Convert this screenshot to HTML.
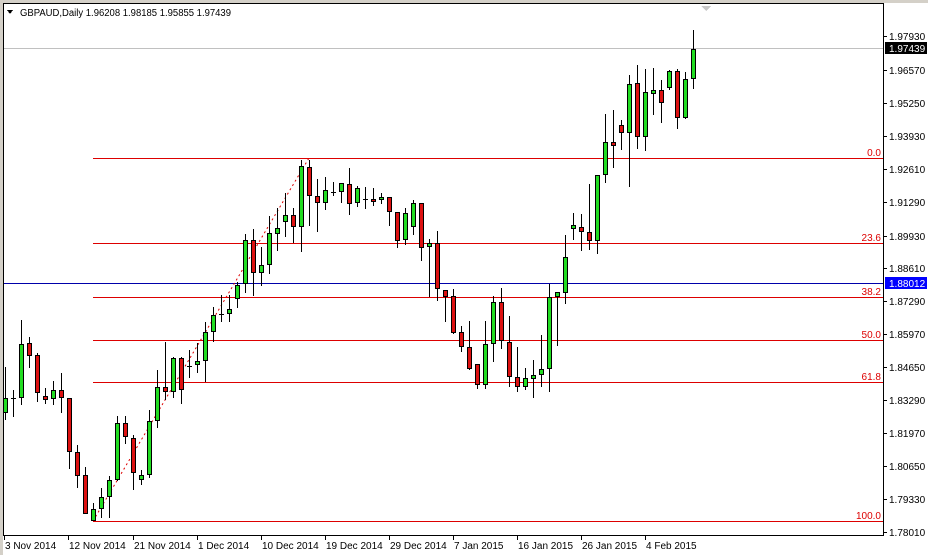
<!DOCTYPE html>
<html><head><meta charset="utf-8"><style>
html,body{margin:0;padding:0;background:#fff;width:928px;height:555px;overflow:hidden}
svg{display:block;font-family:"Liberation Sans",sans-serif;font-size:10px}
.g rect{fill:#22dd22;stroke:#000}
.r rect{fill:#dd1111;stroke:#000}
</style></head><body>
<svg width="928" height="555" viewBox="0 0 928 555" shape-rendering="crispEdges">
<rect x="0" y="0" width="928" height="555" fill="#fff"/>
<rect x="0" y="0" width="928" height="3" fill="#d4d0c8"/>
<rect x="0" y="0" width="3" height="555" fill="#d4d0c8"/>
<rect x="3.5" y="3.5" width="880" height="532" fill="#fff" stroke="#000"/>
<line x1="4" y1="48.5" x2="883" y2="48.5" stroke="#c0c0c0"/>
<line x1="4" y1="283.5" x2="883" y2="283.5" stroke="#0000aa"/>
<g stroke="#dd0000">
<line x1="93" y1="158.5" x2="883" y2="158.5"/>
<line x1="93" y1="243.5" x2="883" y2="243.5"/>
<line x1="93" y1="297.5" x2="883" y2="297.5"/>
<line x1="93" y1="340.5" x2="883" y2="340.5"/>
<line x1="93" y1="382.5" x2="883" y2="382.5"/>
<line x1="93" y1="521.5" x2="883" y2="521.5"/>
</g>
<line x1="93" y1="521" x2="309" y2="158" stroke="#dd0000" stroke-dasharray="2 3" shape-rendering="auto"/>
<g fill="#dd0000" text-anchor="end">
<text x="881" y="156">0.0</text><text x="881" y="241">23.6</text><text x="881" y="295">38.2</text>
<text x="881" y="338">50.0</text><text x="881" y="380">61.8</text><text x="881" y="519">100.0</text>
</g>
<g stroke="#000">
<line x1="5.5" y1="367" x2="5.5" y2="420"/><line x1="13.5" y1="390" x2="13.5" y2="417"/><line x1="21.5" y1="320" x2="21.5" y2="405"/><line x1="29.5" y1="337" x2="29.5" y2="368"/><line x1="37.5" y1="353" x2="37.5" y2="402"/><line x1="45.5" y1="388" x2="45.5" y2="404"/><line x1="53.5" y1="381" x2="53.5" y2="405"/><line x1="61.5" y1="373" x2="61.5" y2="413"/><line x1="69.5" y1="398" x2="69.5" y2="469"/><line x1="77.5" y1="445" x2="77.5" y2="488"/><line x1="85.5" y1="467" x2="85.5" y2="514"/><line x1="93.5" y1="503" x2="93.5" y2="521"/><line x1="101.5" y1="488" x2="101.5" y2="518"/><line x1="109.5" y1="476" x2="109.5" y2="518"/><line x1="117.5" y1="416" x2="117.5" y2="481"/><line x1="125.5" y1="416" x2="125.5" y2="444"/><line x1="133.5" y1="435" x2="133.5" y2="490"/><line x1="141.5" y1="470" x2="141.5" y2="485"/><line x1="149.5" y1="410" x2="149.5" y2="478"/><line x1="157.5" y1="370" x2="157.5" y2="428"/><line x1="165.5" y1="342" x2="165.5" y2="400"/><line x1="173.5" y1="357" x2="173.5" y2="398"/><line x1="181.5" y1="357" x2="181.5" y2="404"/><line x1="189.5" y1="350" x2="189.5" y2="378"/><line x1="197.5" y1="343" x2="197.5" y2="373"/><line x1="205.5" y1="322" x2="205.5" y2="382"/><line x1="213.5" y1="307" x2="213.5" y2="342"/><line x1="221.5" y1="295" x2="221.5" y2="322"/><line x1="229.5" y1="295" x2="229.5" y2="322"/><line x1="237.5" y1="282" x2="237.5" y2="308"/><line x1="245.5" y1="234" x2="245.5" y2="293"/><line x1="253.5" y1="229" x2="253.5" y2="296"/><line x1="261.5" y1="247" x2="261.5" y2="286"/><line x1="269.5" y1="216" x2="269.5" y2="274"/><line x1="277.5" y1="208" x2="277.5" y2="251"/><line x1="285.5" y1="193" x2="285.5" y2="237"/><line x1="293.5" y1="208" x2="293.5" y2="243"/><line x1="301.5" y1="160" x2="301.5" y2="252"/><line x1="309.5" y1="160" x2="309.5" y2="226"/><line x1="317.5" y1="179" x2="317.5" y2="232"/><line x1="325.5" y1="177" x2="325.5" y2="210"/><line x1="333.5" y1="182" x2="333.5" y2="196"/><line x1="341.5" y1="183" x2="341.5" y2="203"/><line x1="349.5" y1="168" x2="349.5" y2="215"/><line x1="357.5" y1="186" x2="357.5" y2="207"/><line x1="365.5" y1="187" x2="365.5" y2="209"/><line x1="373.5" y1="188" x2="373.5" y2="206"/><line x1="381.5" y1="193" x2="381.5" y2="204"/><line x1="389.5" y1="197" x2="389.5" y2="226"/><line x1="397.5" y1="212" x2="397.5" y2="248"/><line x1="405.5" y1="208" x2="405.5" y2="245"/><line x1="413.5" y1="200" x2="413.5" y2="235"/><line x1="421.5" y1="203" x2="421.5" y2="261"/><line x1="429.5" y1="239" x2="429.5" y2="297"/><line x1="437.5" y1="231" x2="437.5" y2="301"/><line x1="445.5" y1="290" x2="445.5" y2="322"/><line x1="453.5" y1="289" x2="453.5" y2="334"/><line x1="461.5" y1="326" x2="461.5" y2="352"/><line x1="469.5" y1="321" x2="469.5" y2="370"/><line x1="477.5" y1="364" x2="477.5" y2="389"/><line x1="485.5" y1="321" x2="485.5" y2="389"/><line x1="493.5" y1="296" x2="493.5" y2="362"/><line x1="501.5" y1="288" x2="501.5" y2="349"/><line x1="509.5" y1="316" x2="509.5" y2="387"/><line x1="517.5" y1="347" x2="517.5" y2="392"/><line x1="525.5" y1="368" x2="525.5" y2="390"/><line x1="533.5" y1="360" x2="533.5" y2="398"/><line x1="541.5" y1="335" x2="541.5" y2="387"/><line x1="549.5" y1="284" x2="549.5" y2="392"/><line x1="557.5" y1="292" x2="557.5" y2="346"/><line x1="565.5" y1="235" x2="565.5" y2="304"/><line x1="573.5" y1="213" x2="573.5" y2="240"/><line x1="581.5" y1="214" x2="581.5" y2="251"/><line x1="589.5" y1="184" x2="589.5" y2="250"/><line x1="597.5" y1="175" x2="597.5" y2="254"/><line x1="605.5" y1="114" x2="605.5" y2="183"/><line x1="613.5" y1="110" x2="613.5" y2="168"/><line x1="621.5" y1="120" x2="621.5" y2="150"/><line x1="629.5" y1="75" x2="629.5" y2="187"/><line x1="637.5" y1="65" x2="637.5" y2="149"/><line x1="645.5" y1="69" x2="645.5" y2="151"/><line x1="653.5" y1="68" x2="653.5" y2="115"/><line x1="661.5" y1="80" x2="661.5" y2="123"/><line x1="669.5" y1="70" x2="669.5" y2="90"/><line x1="677.5" y1="69" x2="677.5" y2="129"/><line x1="685.5" y1="72" x2="685.5" y2="119"/><line x1="693.5" y1="30" x2="693.5" y2="89"/>
<line x1="11" y1="398.5" x2="16" y2="398.5"/><line x1="187" y1="366.5" x2="192" y2="366.5"/><line x1="219" y1="314.5" x2="224" y2="314.5"/><line x1="331" y1="192.5" x2="336" y2="192.5"/><line x1="363" y1="199.5" x2="368" y2="199.5"/>
</g>
<g class="g">
<rect x="3.5" y="398.5" width="4" height="14"/><rect x="19.5" y="344.5" width="4" height="53"/><rect x="51.5" y="390.5" width="4" height="8"/><rect x="91.5" y="509.5" width="4" height="11"/><rect x="99.5" y="497.5" width="4" height="11"/><rect x="107.5" y="480.5" width="4" height="16"/><rect x="115.5" y="423.5" width="4" height="56"/><rect x="139.5" y="475.5" width="4" height="4"/><rect x="147.5" y="421.5" width="4" height="53"/><rect x="155.5" y="387.5" width="4" height="33"/><rect x="171.5" y="358.5" width="4" height="33"/><rect x="195.5" y="361.5" width="4" height="3"/><rect x="203.5" y="332.5" width="4" height="28"/><rect x="211.5" y="315.5" width="4" height="16"/><rect x="227.5" y="309.5" width="4" height="4"/><rect x="235.5" y="285.5" width="4" height="13"/><rect x="243.5" y="240.5" width="4" height="43"/><rect x="259.5" y="265.5" width="4" height="7"/><rect x="267.5" y="233.5" width="4" height="31"/><rect x="275.5" y="228.5" width="4" height="5"/><rect x="283.5" y="215.5" width="4" height="6"/><rect x="299.5" y="166.5" width="4" height="60"/><rect x="323.5" y="190.5" width="4" height="12"/><rect x="339.5" y="183.5" width="4" height="8"/><rect x="355.5" y="188.5" width="4" height="14"/><rect x="379.5" y="197.5" width="4" height="2"/><rect x="403.5" y="213.5" width="4" height="26"/><rect x="411.5" y="203.5" width="4" height="23"/><rect x="427.5" y="243.5" width="4" height="3"/><rect x="483.5" y="344.5" width="4" height="40"/><rect x="491.5" y="302.5" width="4" height="41"/><rect x="523.5" y="378.5" width="4" height="8"/><rect x="531.5" y="375.5" width="4" height="3"/><rect x="539.5" y="369.5" width="4" height="5"/><rect x="547.5" y="297.5" width="4" height="71"/><rect x="555.5" y="292.5" width="4" height="4"/><rect x="563.5" y="257.5" width="4" height="35"/><rect x="571.5" y="225.5" width="4" height="3"/><rect x="595.5" y="175.5" width="4" height="65"/><rect x="603.5" y="142.5" width="4" height="32"/><rect x="627.5" y="84.5" width="4" height="48"/><rect x="643.5" y="92.5" width="4" height="44"/><rect x="651.5" y="90.5" width="4" height="3"/><rect x="667.5" y="71.5" width="4" height="16"/><rect x="683.5" y="79.5" width="4" height="38"/><rect x="691.5" y="49.5" width="4" height="29"/>
</g>
<g class="r">
<rect x="27.5" y="343.5" width="4" height="12"/><rect x="35.5" y="355.5" width="4" height="37"/><rect x="43.5" y="396.5" width="4" height="3"/><rect x="59.5" y="390.5" width="4" height="7"/><rect x="67.5" y="398.5" width="4" height="53"/><rect x="75.5" y="452.5" width="4" height="23"/><rect x="83.5" y="475.5" width="4" height="38"/><rect x="123.5" y="423.5" width="4" height="13"/><rect x="131.5" y="438.5" width="4" height="34"/><rect x="163.5" y="387.5" width="4" height="4"/><rect x="179.5" y="358.5" width="4" height="31"/><rect x="251.5" y="240.5" width="4" height="32"/><rect x="291.5" y="215.5" width="4" height="11"/><rect x="307.5" y="167.5" width="4" height="28"/><rect x="315.5" y="196.5" width="4" height="6"/><rect x="347.5" y="184.5" width="4" height="19"/><rect x="371.5" y="199.5" width="4" height="2"/><rect x="387.5" y="197.5" width="4" height="14"/><rect x="395.5" y="212.5" width="4" height="28"/><rect x="419.5" y="203.5" width="4" height="44"/><rect x="435.5" y="243.5" width="4" height="45"/><rect x="443.5" y="290.5" width="4" height="6"/><rect x="451.5" y="296.5" width="4" height="36"/><rect x="459.5" y="332.5" width="4" height="14"/><rect x="467.5" y="347.5" width="4" height="21"/><rect x="475.5" y="364.5" width="4" height="20"/><rect x="499.5" y="302.5" width="4" height="38"/><rect x="507.5" y="342.5" width="4" height="34"/><rect x="515.5" y="377.5" width="4" height="9"/><rect x="579.5" y="227.5" width="4" height="4"/><rect x="587.5" y="232.5" width="4" height="8"/><rect x="611.5" y="142.5" width="4" height="3"/><rect x="619.5" y="125.5" width="4" height="7"/><rect x="635.5" y="83.5" width="4" height="53"/><rect x="659.5" y="90.5" width="4" height="12"/><rect x="675.5" y="71.5" width="4" height="46"/>
</g>
<polygon points="701,6 711,6 706,11" fill="#c8c8c8"/>
<polygon points="7,10 13,10 10,14" fill="#000"/>
<text x="20" y="16" fill="#000" textLength="211" lengthAdjust="spacingAndGlyphs">GBPAUD,Daily  1.96208 1.98185 1.95855 1.97439</text>
<g fill="#000">
<text x="889" y="40">1.97930</text><text x="889" y="74">1.96570</text><text x="889" y="107">1.95250</text><text x="889" y="140">1.93930</text><text x="889" y="173">1.92610</text><text x="889" y="206">1.91290</text><text x="889" y="240">1.89930</text><text x="889" y="272">1.88610</text><text x="889" y="305">1.87290</text><text x="889" y="338">1.85970</text><text x="889" y="371">1.84650</text><text x="889" y="404">1.83290</text><text x="889" y="437">1.81970</text><text x="889" y="470">1.80650</text><text x="889" y="503">1.79330</text><text x="889" y="536">1.78010</text>
</g>
<g stroke="#000">
<line x1="884" y1="36.5" x2="887" y2="36.5"/><line x1="884" y1="70.5" x2="887" y2="70.5"/><line x1="884" y1="103.5" x2="887" y2="103.5"/><line x1="884" y1="136.5" x2="887" y2="136.5"/><line x1="884" y1="169.5" x2="887" y2="169.5"/><line x1="884" y1="202.5" x2="887" y2="202.5"/><line x1="884" y1="236.5" x2="887" y2="236.5"/><line x1="884" y1="268.5" x2="887" y2="268.5"/><line x1="884" y1="301.5" x2="887" y2="301.5"/><line x1="884" y1="334.5" x2="887" y2="334.5"/><line x1="884" y1="367.5" x2="887" y2="367.5"/><line x1="884" y1="400.5" x2="887" y2="400.5"/><line x1="884" y1="433.5" x2="887" y2="433.5"/><line x1="884" y1="466.5" x2="887" y2="466.5"/><line x1="884" y1="499.5" x2="887" y2="499.5"/><line x1="884" y1="532.5" x2="887" y2="532.5"/>
<line x1="4.5" y1="536" x2="4.5" y2="540"/><line x1="68.5" y1="536" x2="68.5" y2="540"/><line x1="133.5" y1="536" x2="133.5" y2="540"/><line x1="197.5" y1="536" x2="197.5" y2="540"/><line x1="261.5" y1="536" x2="261.5" y2="540"/><line x1="325.5" y1="536" x2="325.5" y2="540"/><line x1="389.5" y1="536" x2="389.5" y2="540"/><line x1="453.5" y1="536" x2="453.5" y2="540"/><line x1="517.5" y1="536" x2="517.5" y2="540"/><line x1="581.5" y1="536" x2="581.5" y2="540"/><line x1="645.5" y1="536" x2="645.5" y2="540"/>
</g>
<rect x="885" y="42" width="42" height="12" fill="#000"/>
<text x="889" y="52" fill="#fff">1.97439</text>
<rect x="885" y="277" width="42" height="12" fill="#0000ff"/>
<text x="889" y="287" fill="#fff">1.88012</text>
<g fill="#000">
<text x="5" y="549">3 Nov 2014</text><text x="69" y="549">12 Nov 2014</text><text x="134" y="549">21 Nov 2014</text><text x="198" y="549">1 Dec 2014</text><text x="262" y="549">10 Dec 2014</text><text x="326" y="549">19 Dec 2014</text><text x="390" y="549">29 Dec 2014</text><text x="454" y="549">7 Jan 2015</text><text x="518" y="549">16 Jan 2015</text><text x="582" y="549">26 Jan 2015</text><text x="646" y="549">4 Feb 2015</text>
</g>
</svg>
</body></html>
